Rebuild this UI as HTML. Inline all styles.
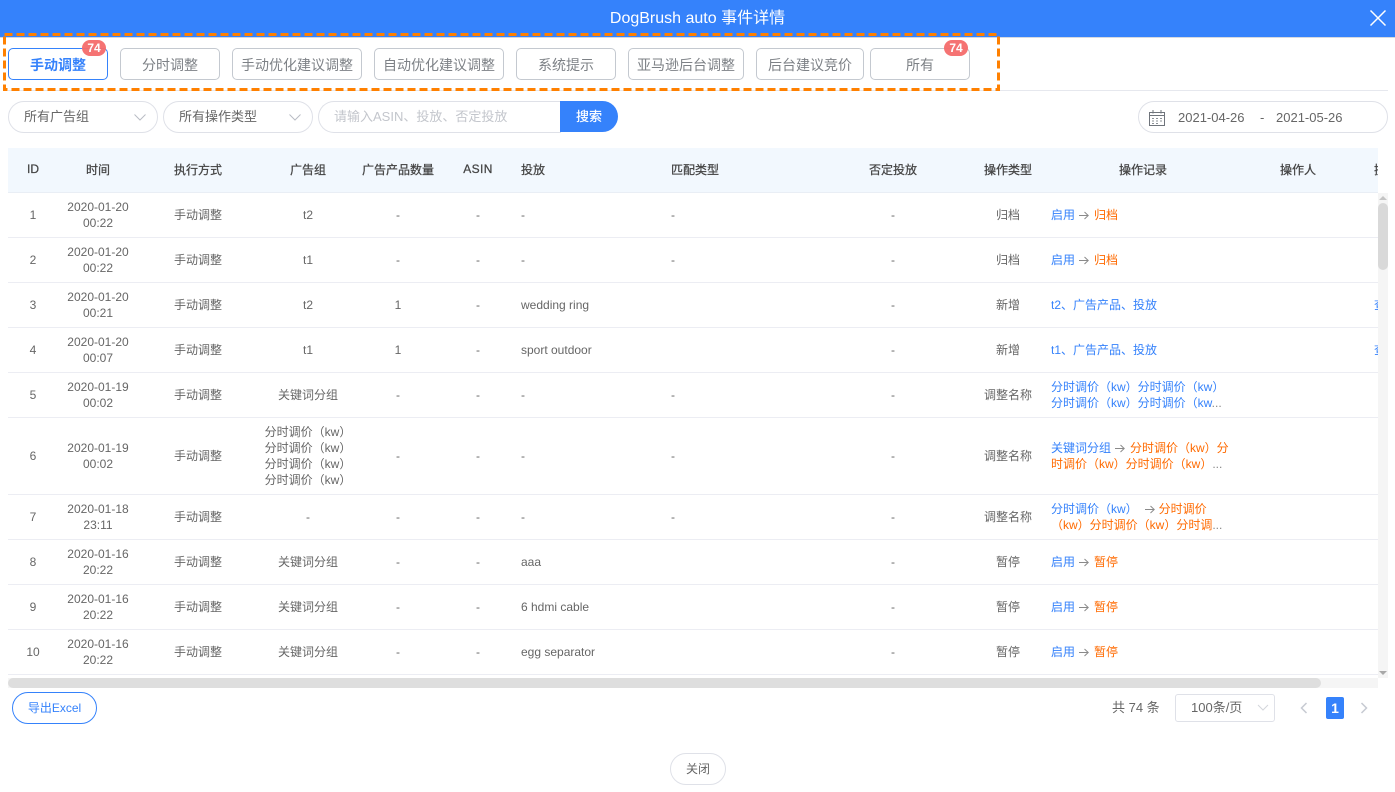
<!DOCTYPE html>
<html lang="zh-CN">
<head>
<meta charset="utf-8">
<title>DogBrush auto 事件详情</title>
<style>
*{box-sizing:border-box}
html,body{margin:0;padding:0;width:1395px;height:792px;overflow:hidden;background:#fff}
body{position:relative;font-family:"Liberation Sans","Noto Sans CJK SC",sans-serif;font-size:12px;color:#666}
.a{position:absolute}
.top{left:0;top:0;width:1395px;height:38px;background:#3582fb;border-bottom:1px solid #d5d9e0;color:#fff;font-size:16px;line-height:37px;text-align:center}
.hr{left:8px;top:90px;width:1380px;height:1px;background:#e6e8ee}
.tab{top:48px;height:32px;border:1px solid #c4c9d0;border-radius:5px;background:#fff;color:#7d8186;font-size:14px;line-height:33px;text-align:center}
.tab.on{border-color:#3582fb;color:#3582fb;font-weight:700}
.badge{top:40px;width:24px;height:16px;border-radius:8px;background:#f56c6c;color:#fff;font-size:12px;font-weight:700;line-height:16px;text-align:center;z-index:2;opacity:.95}
.sel{top:101px;height:32px;width:150px;border:1px solid #dfe1e8;border-radius:16px;background:#fff;font-size:13px;line-height:30px;padding-left:15px;color:#666}
.arrow{top:113px}
.inp{left:318px;top:101px;width:243px;height:32px;border:1px solid #dfe1e8;border-right:0;border-radius:16px 0 0 16px;font-size:13px;line-height:30px;padding-left:15px;color:#c3c6cc}
.btn{left:560px;top:101px;width:58px;height:31px;background:#3582fb;border-radius:0 16px 16px 0;color:#fff;font-size:13px;line-height:31px;text-align:center;-webkit-text-stroke:.2px #fff}
.date{left:1138px;top:101px;width:250px;height:32px;border:1px solid #dfe1e8;border-radius:16px;font-size:13px;line-height:31px;color:#666}
.date span{position:absolute;top:0}
.table{left:8px;top:148px;width:1370px;height:527px;overflow:hidden}
.thead{left:0;top:0;width:1370px;height:45px;background:#f2f8fe;border-bottom:1px solid #e9eef5;color:#444;-webkit-text-stroke:.25px #444}
.thead .c{height:42px}
.r{left:0;width:1370px;border-bottom:1px solid #ecedf3;line-height:16px}
.c{position:absolute;top:0;height:100%;display:flex;align-items:center;justify-content:center;text-align:center}
.l{justify-content:flex-start;text-align:left}
.c1{left:5px;width:40px}.c2{left:50px;width:80px}.c3{left:150px;width:80px}.c4{left:240px;width:120px}
.c5{left:350px;width:80px}.c6{left:440px;width:60px}.c7{left:513px;width:140px}.c8{left:663px;width:140px}
.c9{left:845px;width:80px}.c10{left:960px;width:80px}.c11{left:1043px;width:180px}.c12{left:1250px;width:80px}
.c13{left:1366px;width:30px;color:#3582fb;justify-content:flex-start}
.b{color:#3582fb}.o{color:#ff6a00}.g{color:#888}
.ar{display:inline-block;width:10px;height:9px;margin:0 5px 0 4px;vertical-align:-1px}
.hs{left:8px;top:678px;width:1370px;height:10px;background:#f5f5f5}
.hs i{position:absolute;left:0;top:0;width:1313px;height:10px;background:#dedede;border-radius:5px}
.vs{left:1378px;top:193px;width:10px;height:485px;background:#f5f5f5}
.vs i{position:absolute;left:0;top:10px;width:10px;height:67px;background:#d9d9d9;border-radius:5px}
.excel{left:12px;top:692px;width:85px;height:32px;border:1px solid #3582fb;border-radius:16px;color:#3582fb;font-size:12px;line-height:30px;text-align:center}
.total{left:1112px;top:699px;font-size:13px;line-height:18px;color:#666}
.ps{left:1175px;top:694px;width:100px;height:28px;border:1px solid #dfe1e8;border-radius:3px;font-size:13px;line-height:26px;padding-left:15px;color:#666}
.pg{left:1326px;top:697px;width:18px;height:22px;background:#3582fb;border-radius:2px;color:#fff;font-weight:700;font-size:14px;line-height:22px;text-align:center}
.close{left:670px;top:753px;width:56px;height:32px;border:1px solid #dfe1e8;border-radius:16px;line-height:30px;text-align:center;color:#666}
</style>
</head>
<body>
<svg width="0" height="0" style="position:absolute"><defs><symbol id="arw" viewBox="0 0 10 9"><path d="M0 4.500H9M5.500 1L9.200 4.500L5.500 8" stroke="#8a8a8a" stroke-width="1" fill="none"/></symbol></defs></svg>
<div class="a top">DogBrush auto 事件详情</div>
<svg class="a" style="left:1369px;top:9px" width="19" height="19" viewBox="0 0 19 19"><path d="M1.500 1.500L16.500 16.500M16.500 1.500L1.500 16.500" stroke="#fff" stroke-width="1.500" fill="none"/></svg>
<div class="a hr"></div>

<div class="a tab on" style="left:8px;width:100px">手动调整</div>
<div class="a badge" style="left:82px">74</div>
<div class="a tab" style="left:120px;width:100px">分时调整</div>
<div class="a tab" style="left:232px;width:130px">手动优化建议调整</div>
<div class="a tab" style="left:374px;width:130px">自动优化建议调整</div>
<div class="a tab" style="left:516px;width:100px">系统提示</div>
<div class="a tab" style="left:628px;width:116px">亚马逊后台调整</div>
<div class="a tab" style="left:756px;width:108px">后台建议竞价</div>
<div class="a tab" style="left:870px;width:100px">所有</div>
<div class="a badge" style="left:944px">74</div>
<svg class="a" style="left:0;top:30px;z-index:3" width="1004" height="64" viewBox="0 0 1004 64"><rect x="4.500" y="4.500" width="994" height="55" fill="none" stroke="#ff8000" stroke-width="3" stroke-dasharray="8 4"/></svg>

<div class="a sel" style="left:8px">所有广告组</div>
<svg class="a arrow" style="left:133px" width="14" height="9" viewBox="0 0 14 9"><path d="M1.500 1.500L7 7L12.500 1.500" stroke="#b9bcc4" fill="none"/></svg>
<div class="a sel" style="left:163px">所有操作类型</div>
<svg class="a arrow" style="left:288px" width="14" height="9" viewBox="0 0 14 9"><path d="M1.500 1.500L7 7L12.500 1.500" stroke="#b9bcc4" fill="none"/></svg>
<div class="a inp">请输入ASIN、投放、否定投放</div>
<div class="a btn">搜索</div>
<div class="a date">
<svg class="a" style="left:9px;top:7px" width="18" height="18" viewBox="0 0 18 18"><path d="M1.500 3.500H16.500V16.500H1.500ZM1.500 6.500H16.500M5 1V4.500M13 1V4.500" stroke="#6f747b" fill="none"/><path d="M4 9.500H6M8 9.500H10M12 9.500H14M4 12H6M8 12H10M12 12H14M4 14.500H6M8 14.500H10" stroke="#8b9096" fill="none"/></svg>
<span style="left:39px">2021-04-26</span><span style="left:121px">-</span><span style="left:137px">2021-05-26</span>
</div>

<div class="a table">
<div class="a thead">
<div class="c c1">ID</div><div class="c c2">时间</div><div class="c c3">执行方式</div><div class="c c4">广告组</div><div class="c c5" style="left:340px;width:100px">广告产品数量</div><div class="c c6" style="letter-spacing:.4px">ASIN</div><div class="c c7 l">投放</div><div class="c c8 l">匹配类型</div><div class="c c9">否定投放</div><div class="c c10">操作类型</div><div class="c c11" style="left:1075px;width:120px">操作记录</div><div class="c c12">操作人</div><div class="c c13" style="color:#444">操作</div>
</div>

<div class="a r" style="top:45px;height:45px"><div class="c c1">1</div><div class="c c2">2020-01-20<br>00:22</div><div class="c c3">手动调整</div><div class="c c4">t2</div><div class="c c5">-</div><div class="c c6">-</div><div class="c c7 l">-</div><div class="c c8 l">-</div><div class="c c9">-</div><div class="c c10">归档</div><div class="c c11 l"><div><span class="b">启用</span><svg class="ar"><use href="#arw"/></svg><span class="o">归档</span></div></div></div>

<div class="a r" style="top:90px;height:45px"><div class="c c1">2</div><div class="c c2">2020-01-20<br>00:22</div><div class="c c3">手动调整</div><div class="c c4">t1</div><div class="c c5">-</div><div class="c c6">-</div><div class="c c7 l">-</div><div class="c c8 l">-</div><div class="c c9">-</div><div class="c c10">归档</div><div class="c c11 l"><div><span class="b">启用</span><svg class="ar"><use href="#arw"/></svg><span class="o">归档</span></div></div></div>

<div class="a r" style="top:135px;height:45px"><div class="c c1">3</div><div class="c c2">2020-01-20<br>00:21</div><div class="c c3">手动调整</div><div class="c c4">t2</div><div class="c c5">1</div><div class="c c6">-</div><div class="c c7 l">wedding ring</div><div class="c c9">-</div><div class="c c10">新增</div><div class="c c11 l b">t2、广告产品、投放</div><div class="c c13">查看</div></div>

<div class="a r" style="top:180px;height:45px"><div class="c c1">4</div><div class="c c2">2020-01-20<br>00:07</div><div class="c c3">手动调整</div><div class="c c4">t1</div><div class="c c5">1</div><div class="c c6">-</div><div class="c c7 l">sport outdoor</div><div class="c c9">-</div><div class="c c10">新增</div><div class="c c11 l b">t1、广告产品、投放</div><div class="c c13">查看</div></div>

<div class="a r" style="top:225px;height:45px"><div class="c c1">5</div><div class="c c2">2020-01-19<br>00:02</div><div class="c c3">手动调整</div><div class="c c4">关键词分组</div><div class="c c5">-</div><div class="c c6">-</div><div class="c c7 l">-</div><div class="c c8 l">-</div><div class="c c9">-</div><div class="c c10">调整名称</div><div class="c c11 l b"><div style="white-space:nowrap">分时调价（kw）分时调价（kw）<br>分时调价（kw）分时调价（kw<span class="g">...</span></div></div></div>

<div class="a r" style="top:270px;height:77px"><div class="c c1">6</div><div class="c c2">2020-01-19<br>00:02</div><div class="c c3">手动调整</div><div class="c c4">分时调价（kw）<br>分时调价（kw）<br>分时调价（kw）<br>分时调价（kw）</div><div class="c c5">-</div><div class="c c6">-</div><div class="c c7 l">-</div><div class="c c8 l">-</div><div class="c c9">-</div><div class="c c10">调整名称</div><div class="c c11 l"><div style="white-space:nowrap"><span class="b">关键词分组</span><svg class="ar"><use href="#arw"/></svg><span class="o">分时调价（kw）分</span><br><span class="o">时调价（kw）分时调价（kw）</span><span class="g">...</span></div></div></div>

<div class="a r" style="top:347px;height:45px"><div class="c c1">7</div><div class="c c2">2020-01-18<br>23:11</div><div class="c c3">手动调整</div><div class="c c4">-</div><div class="c c5">-</div><div class="c c6">-</div><div class="c c7 l">-</div><div class="c c8 l">-</div><div class="c c9">-</div><div class="c c10">调整名称</div><div class="c c11 l"><div style="white-space:nowrap"><span class="b">分时调价（kw）</span><svg class="ar" style="margin:0 4px 0 7px"><use href="#arw"/></svg><span class="o">分时调价</span><br><span class="o">（kw）分时调价（kw）分时调</span><span class="g">...</span></div></div></div>

<div class="a r" style="top:392px;height:45px"><div class="c c1">8</div><div class="c c2">2020-01-16<br>20:22</div><div class="c c3">手动调整</div><div class="c c4">关键词分组</div><div class="c c5">-</div><div class="c c6">-</div><div class="c c7 l">aaa</div><div class="c c9">-</div><div class="c c10">暂停</div><div class="c c11 l"><div><span class="b">启用</span><svg class="ar"><use href="#arw"/></svg><span class="o">暂停</span></div></div></div>

<div class="a r" style="top:437px;height:45px"><div class="c c1">9</div><div class="c c2">2020-01-16<br>20:22</div><div class="c c3">手动调整</div><div class="c c4">关键词分组</div><div class="c c5">-</div><div class="c c6">-</div><div class="c c7 l">6 hdmi cable</div><div class="c c9">-</div><div class="c c10">暂停</div><div class="c c11 l"><div><span class="b">启用</span><svg class="ar"><use href="#arw"/></svg><span class="o">暂停</span></div></div></div>

<div class="a r" style="top:482px;height:45px"><div class="c c1">10</div><div class="c c2">2020-01-16<br>20:22</div><div class="c c3">手动调整</div><div class="c c4">关键词分组</div><div class="c c5">-</div><div class="c c6">-</div><div class="c c7 l">egg separator</div><div class="c c9">-</div><div class="c c10">暂停</div><div class="c c11 l"><div><span class="b">启用</span><svg class="ar"><use href="#arw"/></svg><span class="o">暂停</span></div></div></div>
</div>

<div class="a hs"><i></i></div>
<div class="a vs"><i></i></div>
<svg class="a" style="left:1378px;top:194px" width="10" height="8" viewBox="0 0 10 8"><path d="M5 2L9 6H1Z" fill="#c4c4c4"/></svg>
<svg class="a" style="left:1378px;top:669px" width="10" height="8" viewBox="0 0 10 8"><path d="M5 6L1 2H9Z" fill="#a8a8a8"/></svg>

<div class="a excel">导出Excel</div>
<div class="a total">共 74 条</div>
<div class="a ps">100条/页</div>
<svg class="a" style="left:1256px;top:703px" width="14" height="9" viewBox="0 0 14 9"><path d="M2 2L7 7L12 2" stroke="#d3d5db" fill="none"/></svg>
<svg class="a" style="left:1298px;top:701px" width="12" height="14" viewBox="0 0 12 14"><path d="M8.500 2L3.500 7L8.500 12" stroke="#c6cad2" stroke-width="1.500" fill="none"/></svg>
<div class="a pg">1</div>
<svg class="a" style="left:1358px;top:701px" width="12" height="14" viewBox="0 0 12 14"><path d="M3.500 2L8.500 7L3.500 12" stroke="#c6cad2" stroke-width="1.500" fill="none"/></svg>
<div class="a close">关闭</div>
</body>
</html>
